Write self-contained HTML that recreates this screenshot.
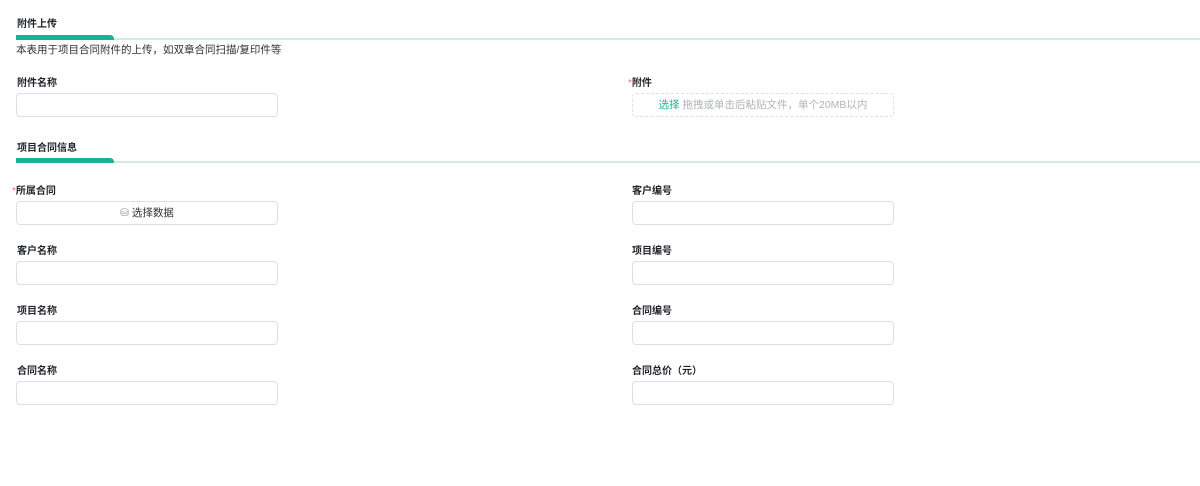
<!DOCTYPE html>
<html><head><meta charset="utf-8"><style>
body{margin:0;width:1200px;height:486px;background:#fff;font-family:"Liberation Sans","Noto Sans CJK SC",sans-serif;color:#303133;position:relative;overflow:hidden}
.a{position:absolute}
.t{font-size:10px;font-weight:bold;color:#1f2329}
.line{position:absolute;left:16px;right:0;height:2px;background:#c9efe6}
.bar{position:absolute;left:16px;width:98px;height:5px;background:#17b394;border-radius:0 4px 0 0}
.in{position:absolute;width:260px;height:22px;border:1px solid #dcdfe6;border-radius:4px;background:#fff}
.l{position:absolute;font-size:10px;font-weight:bold;color:#1f2329}
.s{color:#f56c6c;font-weight:normal}
</style></head><body>
<div class="a t" style="left:17px;top:15px">附件上传</div>
<div class="line" style="top:38px"></div><div class="bar" style="top:35px"></div>
<div class="a" style="left:16px;top:42px;font-size:10.5px;color:#303133">本表用于项目合同附件的上传，如双章合同扫描/复印件等</div>
<div class="l" style="left:17px;top:74px">附件名称</div>
<div class="in" style="left:16px;top:93px"></div>
<div class="l" style="left:628px;top:74px"><span class="s">*</span>附件</div>
<div class="in" style="left:632px;top:93px;border:1px dashed #dcdfe6;font-size:10.5px;text-align:center;line-height:23px;color:#b0b3b8"><span style="color:#17b394">选择</span> 拖拽或单击后粘贴文件，单个20MB以内</div>
<div class="a t" style="left:17px;top:139px">项目合同信息</div>
<div class="line" style="top:161px"></div><div class="bar" style="top:158px"></div>
<div class="l" style="left:12px;top:182px"><span class="s">*</span>所属合同</div>
<div class="in" style="left:16px;top:201px;font-size:10.5px;text-align:center;line-height:23px;color:#303133"><span style="color:#909399">⛁</span> 选择数据</div>
<div class="l" style="left:632px;top:182px">客户编号</div><div class="in" style="left:632px;top:201px"></div>
<div class="l" style="left:17px;top:242px">客户名称</div><div class="in" style="left:16px;top:261px"></div>
<div class="l" style="left:632px;top:242px">项目编号</div><div class="in" style="left:632px;top:261px"></div>
<div class="l" style="left:17px;top:302px">项目名称</div><div class="in" style="left:16px;top:321px"></div>
<div class="l" style="left:632px;top:302px">合同编号</div><div class="in" style="left:632px;top:321px"></div>
<div class="l" style="left:17px;top:362px">合同名称</div><div class="in" style="left:16px;top:381px"></div>
<div class="l" style="left:632px;top:362px">合同总价（元）</div><div class="in" style="left:632px;top:381px"></div>
</body></html>
